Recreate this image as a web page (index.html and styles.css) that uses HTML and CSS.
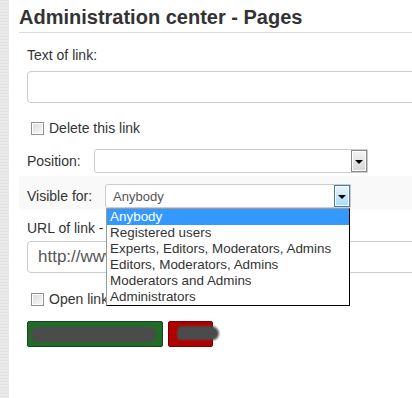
FILE: index.html
```html
<!DOCTYPE html>
<html lang="en">
<head>
    <meta charset="UTF-8">
    <title>Administration center - Pages</title>
    <link rel="stylesheet" href="styles.css">
</head>
<body>
    <div class="side"></div>
    <div class="main">
        <h1 class="title">Administration center - Pages</h1>

        <div class="form">
            <label class="label">Text of link:</label>
            <div class="input"></div>

            <div class="check-row">
                <span class="checkbox"></span>
                <span>Delete this link</span>
            </div>

            <div class="field-row">
                <span class="label">Position:</span>
                <div class="select select-position">
                    <span class="select-text"></span>
                    <span class="select-btn"><span class="arrow"></span></span>
                </div>
            </div>

            <div class="field-row band">
                <span class="label">Visible for:</span>
                <div class="select select-visible">
                    <span class="select-text">Anybody</span>
                    <span class="select-btn focus"><span class="arrow"></span></span>
                    <ul class="dropdown">
                        <li class="selected">Anybody</li>
                        <li>Registered users</li>
                        <li>Experts, Editors, Moderators, Admins</li>
                        <li>Editors, Moderators, Admins</li>
                        <li>Moderators and Admins</li>
                        <li>Administrators</li>
                    </ul>
                </div>
            </div>

            <label class="label url-label">URL of link - </label>
            <div class="input url-input">http://www</div>

            <div class="check-row open-row">
                <span class="checkbox"></span>
                <span>Open link in new window</span>
            </div>

            <div class="buttons">
                <button class="btn btn-save"><span class="scribble wide"></span></button>
                <button class="btn btn-del"><span class="scribble small"></span></button>
            </div>
        </div>
    </div>
</body>
</html>
```

FILE: styles.css
```css
body {
    margin: 0;
    display: flex;
    height: 398px;
    overflow: hidden;
    font-family: "Liberation Sans", Arial, sans-serif;
    color: #333;
    background: #fff;
}
.side {
    width: 9px;
    flex-shrink: 0;
    background-color: #e6e6e6;
    background-image: repeating-linear-gradient(0deg, #ececec 0 1px, #e2e2e2 1px 2px, #e9e9e9 2px 3px);
}
.main {
    width: 420px;
    flex-shrink: 0;
    padding-left: 10px;
}
.title {
    margin: 0;
    padding-top: 5px;
    height: 27px;
    font-size: 20px;
    line-height: 24px;
    font-weight: bold;
    color: #333;
    border-bottom: 1px solid #ddd;
}
.form {
    padding-left: 8px;
}
.label {
    display: block;
    font-size: 14px;
    line-height: 16px;
    margin-top: 14px;
}
.input {
    margin-top: 8px;
    height: 30px;
    width: 400px;
    border: 1px solid #ccc;
    border-radius: 4px;
    font-size: 17px;
    line-height: 30px;
    padding-left: 10px;
    color: #555;
}
.check-row {
    display: flex;
    align-items: center;
    gap: 5px;
    margin-top: 17px;
    padding-left: 4px;
    font-size: 14px;
    height: 16px;
}
.checkbox {
    width: 11px;
    height: 11px;
    border: 1px solid #8f8f8f;
    background: linear-gradient(135deg, #dcdcdc, #f8f8f8);
    box-shadow: inset 0 0 0 1px #fff;
}
.field-row {
    display: flex;
    align-items: center;
    font-size: 14px;
}
.field-row .label {
    margin-top: 0;
}
.check-row + .field-row {
    margin-top: 13px;
    height: 24px;
}
.select {
    position: relative;
    height: 22px;
    border: 1px solid #ccc;
    border-radius: 3px 0 0 3px;
    display: flex;
    align-items: center;
    font-size: 13px;
    color: #555;
}
.select-position {
    margin-left: 13px;
    width: 272px;
}
.select-text {
    flex: 1;
    padding-left: 7px;
}
.select-btn {
    width: 14px;
    height: 20px;
    border: 1px solid #8a8a8a;
    box-shadow: inset 0 0 0 1px #fff;
    background: linear-gradient(#f4f4f4, #d8d8d8);
    display: flex;
    align-items: center;
    justify-content: center;
}
.select-btn.focus {
    border-color: #3c7fb1;
    background: linear-gradient(#eaf6fd, #a7d9f5);
}
.arrow {
    width: 0;
    height: 0;
    border-left: 4px solid transparent;
    border-right: 4px solid transparent;
    border-top: 4px solid #000;
    margin-top: 2px;
}
.band {
    margin-top: 3px;
    margin-left: -8px;
    padding-left: 8px;
    padding-top: 8px;
    height: 25px;
    align-items: flex-start;
    background: #f9f9f9;
}
.band .label {
    line-height: 24px;
}
.select-visible {
    margin-left: 13px;
    width: 244px;
    background: #fff;
}
.dropdown {
    position: absolute;
    left: 0;
    top: 23px;
    width: 244px;
    margin: 0;
    padding: 0;
    list-style: none;
    background: #fff;
    border: 1px solid #000;
    border-left-color: #999;
    border-top-color: #999;
    font-size: 13.4px;
    line-height: 16px;
    color: #333;
    z-index: 2;
    box-sizing: border-box;
}
.dropdown li {
    padding-left: 3px;
    height: 16px;
}
.dropdown .selected {
    background: #3399ff;
    color: #fff;
}
.url-label {
    margin-top: 11px;
}
.url-input {
    margin-top: 5px;
}
.open-row {
    margin-top: 18px;
}
.buttons {
    display: flex;
    gap: 5px;
    margin-top: 14px;
}
.btn {
    position: relative;
    height: 26px;
    border-radius: 2px;
    padding: 0;
}
.btn-save {
    width: 136px;
    background: #226b2a;
    border: 1px solid #14481a;
}
.btn-del {
    width: 45px;
    background: #b00000;
    border: 1px solid #7a0000;
}
.scribble {
    position: absolute;
    background: #4b4b4b;
    border-radius: 10px;
    filter: blur(1px);
}
.scribble.wide {
    left: 3px;
    right: 6px;
    top: 5px;
    height: 15px;
}
.scribble.small {
    left: 8px;
    width: 42px;
    top: 4px;
    height: 14px;
    border-radius: 8px 12px 10px 6px;
}
```
